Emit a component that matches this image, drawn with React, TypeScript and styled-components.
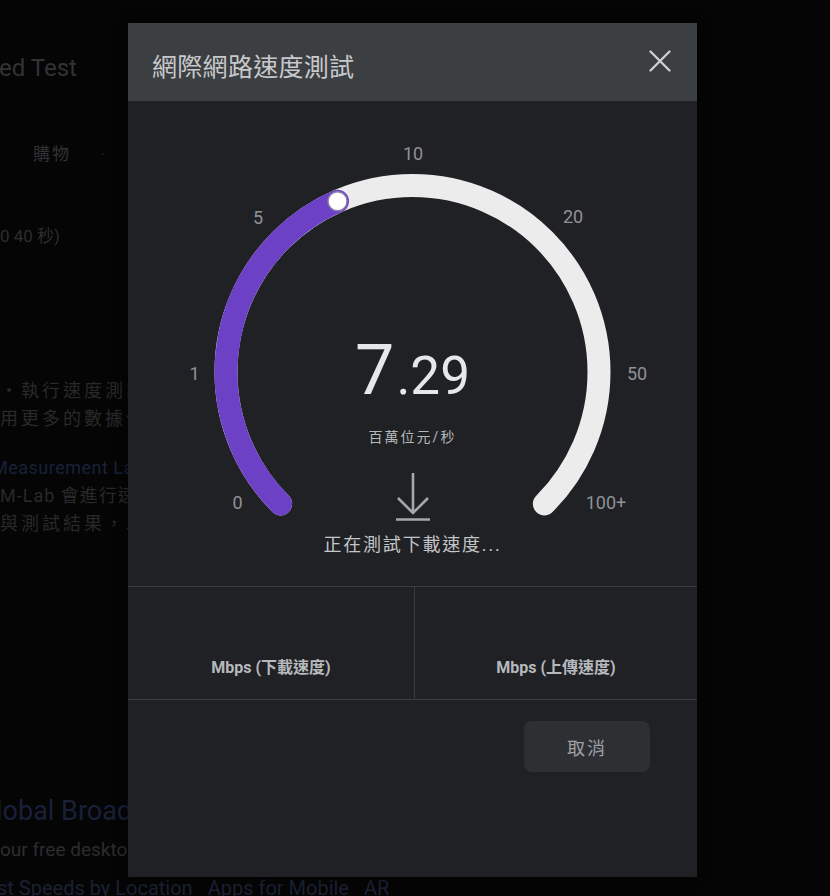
import React from "react";
import styled, { createGlobalStyle } from "styled-components";

const GlobalStyle = createGlobalStyle`
    html, body {
        margin: 0;
        padding: 0;
        background: #050505;
    }
    body {
        font-family: Roboto, "Noto Sans CJK TC", sans-serif;
        overflow: hidden;
    }
`;

const CX = 284.5;
const CY = 271;
const R = 186.5;
const PROGRESS = -23.7;

const point = (deg: number): [number, number] => {
    const a = (deg * Math.PI) / 180;
    return [CX + R * Math.sin(a), CY - R * Math.cos(a)];
};

const arcPath = (from: number, to: number) => {
    const [x0, y0] = point(from);
    const [x1, y1] = point(to);
    const large = to - from > 180 ? 1 : 0;
    return `M ${x0} ${y0} A ${R} ${R} 0 ${large} 1 ${x1} ${y1}`;
};

const scaleLabels = [
    { text: "0", x: 109.5, y: 401 },
    { text: "1", x: 66.5, y: 272 },
    { text: "5", x: 130, y: 116 },
    { text: "10", x: 285, y: 52.5 },
    { text: "20", x: 445, y: 115 },
    { text: "50", x: 509, y: 272 },
    { text: "100+", x: 478, y: 401 },
];

export default function App() {
    const [kx, ky] = point(PROGRESS);
    return (
        <>
            <GlobalStyle />
            <Page>
                <BackdropPage>
                    <BgTitle>ed Test</BgTitle>
                    <BgTabs>
                        <BgTab>購物</BgTab>
                        <BgDot>·</BgDot>
                        <BgTab>新聞</BgTab>
                    </BgTabs>
                    <BgLine top={58}>0 40 秒)</BgLine>
                    <BgParagraph top={129}>
                        <div>・執行速度測試</div>
                        <div>用更多的數據傳</div>
                    </BgParagraph>
                    <BgParagraph top={21}>
                        <BgLink>Measurement Lab</BgLink>
                        <BgLatin>M-Lab 會進行速度</BgLatin>
                        <div>與測試結果，以</div>
                    </BgParagraph>
                    <BgHeading>lobal Broadband</BgHeading>
                    <BgLine top={9} big>
                        our free desktop
                    </BgLine>
                    <BgFooter>
                        <span>st Speeds by Location</span>
                        <span>Apps for Mobile</span>
                        <span>AR</span>
                    </BgFooter>
                </BackdropPage>

                <Dialog>
                    <DialogHeader>
                        <DialogTitle>網際網路速度測試</DialogTitle>
                        <CloseButton aria-label="close">
                            <svg width="24" height="22" viewBox="0 0 24 22">
                                <path d="M2.5 1.5 L21.5 20.5 M21.5 1.5 L2.5 20.5" stroke="#cfd0d2" strokeWidth="2.3" strokeLinecap="round" />
                            </svg>
                        </CloseButton>
                    </DialogHeader>

                    <GaugeArea>
                        <GaugeSvg width="569" height="485" viewBox="0 0 569 485">
                            <path d={arcPath(-135, 135)} stroke="#ececec" strokeWidth="23" fill="none" strokeLinecap="round" />
                            <path d={arcPath(-135, PROGRESS)} stroke="#6d41c6" strokeWidth="23" fill="none" strokeLinecap="round" />
                            <circle cx={kx} cy={ky} r="9.5" fill="#ffffff" stroke="#8c80b0" strokeWidth="1.5" />
                            {scaleLabels.map((l) => (
                                <ScaleText key={l.text} x={l.x} y={l.y} textAnchor="middle" dominantBaseline="central">
                                    {l.text}
                                </ScaleText>
                            ))}
                        </GaugeSvg>
                        <Readout>
                            <SpeedValue>
                                <BigDigit>7</BigDigit>
                                <SmallDigits>.29</SmallDigits>
                            </SpeedValue>
                            <Unit>百萬位元/秒</Unit>
                            <ArrowIcon width="36" height="49" viewBox="0 0 36 49">
                                <path d="M18 1 V41 M3 26 L18 41 L33 26 M1 47.5 H35" stroke="#a4a7ab" strokeWidth="2.6" fill="none" />
                            </ArrowIcon>
                            <Status>正在測試下載速度...</Status>
                        </Readout>
                    </GaugeArea>

                    <StatsRow>
                        <StatCell>
                            <StatLabel>Mbps (下載速度)</StatLabel>
                        </StatCell>
                        <StatCell divider>
                            <StatLabel>Mbps (上傳速度)</StatLabel>
                        </StatCell>
                    </StatsRow>

                    <DialogFooter>
                        <CancelButton>取消</CancelButton>
                    </DialogFooter>
                </Dialog>
            </Page>
        </>
    );
}

const Page = styled.div`
    position: relative;
    width: 830px;
    height: 896px;
    overflow: hidden;
    background: #050505;
`;

const BackdropPage = styled.div`
    display: flex;
    flex-direction: column;
    padding-top: 54px;
    color: #2c2d2f;
    white-space: nowrap;
`;

const BgTitle = styled.div`
    font-size: 24px;
    line-height: 28px;
    color: #323335;
    margin-left: -1px;
`;

const BgTabs = styled.div`
    display: flex;
    align-items: center;
    gap: 30px;
    margin-top: 60px;
    padding-left: 33px;
    font-size: 17px;
    line-height: 24px;
    color: #323234;
`;

const BgTab = styled.span`
    letter-spacing: 2px;
`;

const BgDot = styled.span`
    color: #1c1c1c;
`;

const BgLine = styled.div<{ top: number; big?: boolean }>`
    margin-top: ${({ top }) => top}px;
    font-size: ${({ big }) => (big ? 19 : 17)}px;
    line-height: ${({ big }) => (big ? 26 : 24)}px;
    color: #2c2d2f;
`;

const BgParagraph = styled.div<{ top: number }>`
    margin-top: ${({ top }) => top}px;
    font-size: 18px;
    line-height: 28px;
    letter-spacing: 3px;
    color: #28292b;
`;

const BgLink = styled.div`
    color: #18213a;
    letter-spacing: 0.5px;
    margin-left: -8px;
`;

const BgLatin = styled.div`
    letter-spacing: 1px;
`;

const BgHeading = styled.div`
    margin-top: 256px;
    margin-left: -4px;
    font-size: 27px;
    line-height: 34px;
    color: #18203a;
`;

const BgFooter = styled.div`
    display: flex;
    gap: 15px;
    margin-top: 14px;
    margin-left: -3px;
    font-size: 20px;
    line-height: 22px;
    color: #1a2133;
`;

const Dialog = styled.div`
    position: absolute;
    left: 128px;
    top: 23px;
    width: 569px;
    height: 854px;
    display: flex;
    flex-direction: column;
    background: #202124;
    box-shadow: 0 0 12px rgba(0, 0, 0, 0.5);
`;

const DialogHeader = styled.div`
    height: 78px;
    flex-shrink: 0;
    display: flex;
    align-items: center;
    justify-content: space-between;
    padding: 6px 25px 0 24px;
    box-sizing: border-box;
    background: #3c3f42;
`;

const DialogTitle = styled.div`
    font-family: "Noto Sans CJK TC", sans-serif;
    font-size: 25px;
    line-height: 32px;
    color: #c7c9cc;
    letter-spacing: 0.3px;
`;

const CloseButton = styled.button`
    border: none;
    background: none;
    padding: 0;
    margin-top: -9px;
    display: flex;
    cursor: pointer;
`;

const GaugeArea = styled.div`
    height: 485px;
    flex-shrink: 0;
    display: grid;
    & > * {
        grid-area: 1 / 1;
    }
`;

const GaugeSvg = styled.svg`
    display: block;
`;

const ScaleText = styled.text`
    font-family: Roboto, sans-serif;
    font-size: 18px;
    fill: #8f9296;
`;

const Readout = styled.div`
    display: flex;
    flex-direction: column;
    align-items: center;
    padding-top: 235px;
`;

const SpeedValue = styled.div`
    display: flex;
    align-items: baseline;
    height: 68px;
    line-height: 68px;
    color: #e6e7e9;
    font-family: Roboto, sans-serif;
`;

const BigDigit = styled.span`
    font-size: 70px;
`;

const SmallDigits = styled.span`
    font-size: 53px;
    margin-left: 2px;
`;

const Unit = styled.div`
    margin-top: 23px;
    font-size: 14px;
    line-height: 20px;
    letter-spacing: 2px;
    color: #b4b7bb;
`;

const ArrowIcon = styled.svg`
    display: block;
    margin-top: 25px;
`;

const Status = styled.div`
    margin-top: 12px;
    font-size: 18px;
    line-height: 24px;
    letter-spacing: 1.8px;
    color: #c3c5c9;
`;

const StatsRow = styled.div`
    height: 114px;
    flex-shrink: 0;
    box-sizing: border-box;
    display: grid;
    grid-template-columns: 286px 1fr;
    border-top: 1px solid #3a3c40;
    border-bottom: 1px solid #3a3c40;
`;

const StatCell = styled.div<{ divider?: boolean }>`
    display: flex;
    flex-direction: column;
    justify-content: flex-end;
    align-items: center;
    padding-bottom: 20px;
    border-left: ${({ divider }) => (divider ? "1px solid #3a3c40" : "none")};
`;

const StatLabel = styled.div`
    font-size: 16px;
    line-height: 22px;
    font-weight: 700;
    color: #b6b9bd;
`;

const DialogFooter = styled.div`
    display: flex;
    justify-content: flex-end;
    padding: 21px 47px 0 0;
`;

const CancelButton = styled.button`
    width: 126px;
    height: 51px;
    border: none;
    border-radius: 8px;
    background: #2e2f33;
    color: #9ea1a6;
    font-family: "Noto Sans CJK TC", sans-serif;
    font-size: 18px;
    letter-spacing: 2px;
    cursor: pointer;
`;
